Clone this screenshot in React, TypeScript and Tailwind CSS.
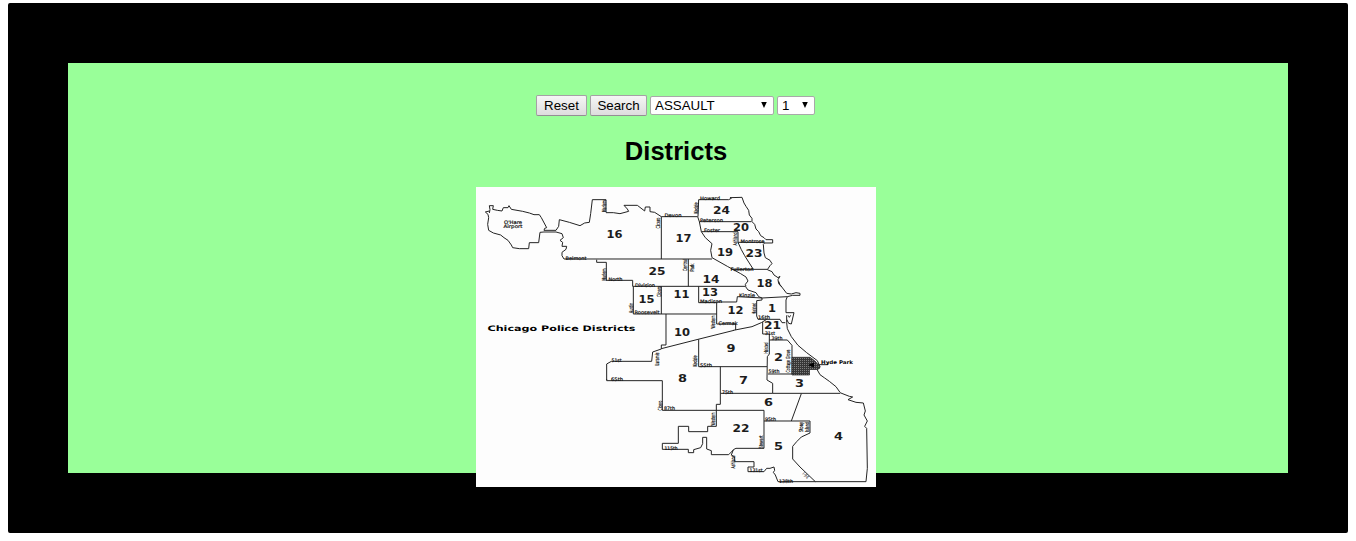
import React from "react";

type Label = { t: string; x: number; y: number; w: number; v?: boolean };

// Outline strokes, grouped by the origin of each map sector (three units per pixel).
const sectors: { x: number; y: number; d: string[] }[] = [
  {
    x: 476,
    y: 187,
    d: [
      "M40 78L42 68L40 56H52L50 67L64 70L78 72L82 62L96 62L99 56L106 67L140 73L160 78L174 83H190L196 92L212 122L206 124L204 130H240L248 118L250 98L280 106L312 116L326 108L340 106L344 80L349 38H390V76",
      "M40 72L28 75L36 82L38 92L35 112L38 130L52 138L74 144L84 152L96 160L106 174L110 182L130 185H158L160 167H188L192 136L204 135H240L258 140L262 152L252 160L260 166L258 178H272L270 187L258 196V206L264 216H372",
      "M362 218V226H391V280",
    ],
  },
  {
    x: 600,
    y: 187,
    d: [
      "M18 77L40 77L60 80L86 73L82 66L72 55H112L134 72L136 60H150V74L164 76L184 89H293",
      "M184 89V216M0 216H336M265 216V298M18 280H98V298H436",
    ],
  },
  {
    x: 690,
    y: 187,
    d: [
      "M24 89L26 38H116L124 34L120 32L156 31L162 48L168 58L176 70L178 84L186 94V104L194 112L198 126L206 134L212 146L222 152L228 158H248V168H224L220 172L222 198L226 212L240 220L246 230L240 236L232 248L246 254L252 264L264 272L270 268L264 278L266 290L274 299",
      "M23 89L28 104H184M28 104L34 134L46 152L66 170L62 190L66 212L112 238L152 260L168 270L174 282L166 292L168 298M34 134H144V166H224M144 166L154 188L164 206L174 222L190 247H232M124 247H190",
    ],
  },
  {
    x: 600,
    y: 280,
    d: [
      "M100 19V102H198V195H184V207L158 216L155 244H34L20 252V300",
      "M184 19V102M198 102H350M296 19V68H350V132",
      "M184 206L294 178L402 151M296 178V260H501M361 260V373",
    ],
  },
  {
    x: 690,
    y: 280,
    d: [
      "M166 19L174 30L198 38L206 50L216 54L292 50L288 60V98H312L304 132L296 130L290 118V106M286 128H276L270 118H204L200 108V62L216 60V54L142 50L140 66H80",
      "M266 4L270 14L290 40L304 42L318 38L330 40V46H308L292 50M294 106L298 112L302 106",
      "M80 132H137V150M130 151L186 140L214 128L230 118M218 126V162H238V222L232 230L231 300L248 310V340H92",
      "M238 180H292L306 196V282H234",
      "M290 118V128L292 146L304 170L324 196L350 218L382 242L390 260L382 270L390 284L404 294L418 304L438 320L450 337M248 340H450M334 341L304 423",
      "M356 254H414V246",
    ],
  },
  {
    x: 600,
    y: 375,
    d: [
      "M20 12V17H187V106H492M361 88H349V154H323V170H266V154H235V205H187V223H265V233H281V224L302 218L308 206V187H320V222L334 227V239H386L400 225",
    ],
  },
  {
    x: 720,
    y: 375,
    d: [
      "M132 106V220H48L40 224L34 240L44 246V260H102V276H84V290H132L140 280H150L162 276L164 286L160 292L166 300L174 320H438L442 280L440 160L434 154L442 138L432 120L436 108L430 84L408 82L384 74L398 66L388 64L360 53",
      "M132 138H270V174L244 186L230 200L218 214V252L240 276L286 320",
    ],
  },
];

const districts: Label[] = [
  { t: "24", x: 721.5, y: 214, w: 17 },
  { t: "20", x: 741, y: 231, w: 16 },
  { t: "16", x: 614.5, y: 238, w: 16 },
  { t: "17", x: 683.5, y: 242, w: 16 },
  { t: "19", x: 725, y: 256, w: 16 },
  { t: "23", x: 754, y: 257, w: 17 },
  { t: "25", x: 657, y: 275, w: 17 },
  { t: "14", x: 711, y: 283, w: 17 },
  { t: "18", x: 764.5, y: 287, w: 16 },
  { t: "15", x: 646.5, y: 303, w: 16 },
  { t: "11", x: 681.5, y: 298, w: 16 },
  { t: "13", x: 710, y: 296, w: 16 },
  { t: "12", x: 735.5, y: 314, w: 16 },
  { t: "1", x: 772, y: 312, w: 8 },
  { t: "21", x: 772.5, y: 329, w: 17 },
  { t: "10", x: 682, y: 336, w: 16 },
  { t: "9", x: 731, y: 352, w: 9 },
  { t: "2", x: 778.5, y: 361, w: 9 },
  { t: "8", x: 682.5, y: 382, w: 9 },
  { t: "7", x: 743.5, y: 384, w: 9 },
  { t: "3", x: 799.5, y: 387, w: 9 },
  { t: "6", x: 768.5, y: 406, w: 9 },
  { t: "22", x: 741, y: 432, w: 17 },
  { t: "4", x: 838.5, y: 440, w: 9 },
  { t: "5", x: 778.5, y: 450, w: 9 },
];

const streets: Label[] = [
  { t: "O'Hare", x: 513, y: 223.5, w: 18 },
  { t: "Airport", x: 513, y: 228.2, w: 19 },
  { t: "Harlem", x: 605.5, y: 206, w: 12, v: true },
  { t: "Belmont", x: 576, y: 259.5, w: 21 },
  { t: "Devon", x: 673, y: 217, w: 17 },
  { t: "Cicero", x: 659.5, y: 223, w: 11, v: true },
  { t: "Kedzie", x: 698, y: 208, w: 11, v: true },
  { t: "Howard", x: 710, y: 199.5, w: 20 },
  { t: "Peterson", x: 711.5, y: 221.5, w: 23 },
  { t: "Foster", x: 712, y: 231.5, w: 16 },
  { t: "Ashland", x: 737, y: 239, w: 13, v: true },
  { t: "Montrose", x: 752.5, y: 243, w: 24 },
  { t: "Fullerton", x: 742, y: 270.5, w: 23 },
  { t: "Harlem", x: 605.5, y: 274.5, w: 12, v: true },
  { t: "North", x: 615.5, y: 280.5, w: 14 },
  { t: "Division", x: 645, y: 286.5, w: 20 },
  { t: "Central", x: 687, y: 265, w: 12, v: true },
  { t: "Park", x: 694, y: 267.5, w: 8, v: true },
  { t: "Cicero", x: 661, y: 291.5, w: 11, v: true },
  { t: "Austin", x: 632.5, y: 308, w: 10, v: true },
  { t: "Roosevelt", x: 647, y: 314, w: 25 },
  { t: "Madison", x: 711, y: 302.5, w: 22 },
  { t: "Kinzie", x: 747, y: 297, w: 16 },
  { t: "Halsted", x: 755.5, y: 308.5, w: 11, v: true },
  { t: "16th", x: 764, y: 318.5, w: 12 },
  { t: "Western", x: 714.5, y: 322, w: 13, v: true },
  { t: "Cermak", x: 728, y: 324.5, w: 19 },
  { t: "31st", x: 770, y: 334.5, w: 10 },
  { t: "39th", x: 777, y: 340, w: 11 },
  { t: "Halsted", x: 767.5, y: 348, w: 11, v: true },
  { t: "Cottage Grove", x: 789.5, y: 361, w: 23, v: true },
  { t: "59th", x: 774, y: 373, w: 11 },
  { t: "51st", x: 616.5, y: 361.5, w: 10 },
  { t: "65th", x: 617, y: 380.5, w: 12 },
  { t: "Laramie", x: 658.5, y: 359, w: 13, v: true },
  { t: "Kedzie", x: 697, y: 361, w: 11, v: true },
  { t: "55th", x: 706, y: 366.5, w: 12 },
  { t: "75th", x: 727.5, y: 393.5, w: 11 },
  { t: "Cicero", x: 661.5, y: 405.5, w: 10, v: true },
  { t: "87th", x: 669.5, y: 410, w: 11 },
  { t: "Western", x: 715, y: 419, w: 13, v: true },
  { t: "95th", x: 770.5, y: 421, w: 11 },
  { t: "Stony", x: 803, y: 427, w: 10, v: true },
  { t: "Island", x: 809, y: 427, w: 10, v: true },
  { t: "Stewart", x: 762.5, y: 442, w: 13, v: true },
  { t: "115th", x: 671, y: 449.5, w: 13 },
  { t: "Ashland", x: 734.5, y: 462, w: 13, v: true },
  { t: "131st", x: 756, y: 471.5, w: 13 },
  { t: "138th", x: 786, y: 482.5, w: 14 },
];

function DistrictMap() {
  return (
    <svg
      className="block h-[300px] w-[400px] shrink-0 bg-[#fdfdfd]"
      viewBox="476 187 400 300"
      fontFamily='"DejaVu Sans", Verdana, sans-serif'
      role="img"
    >
      <defs>
        <pattern id="hatch" width="2" height="2" patternUnits="userSpaceOnUse">
          <rect width="2" height="2" fill="#383838" />
          <rect width="1" height="1" fill="#808080" />
        </pattern>
      </defs>
      {sectors.map((s, i) => (
        <g
          key={i}
          transform={`translate(${s.x} ${s.y}) scale(0.33333)`}
          fill="none"
          stroke="#222"
          strokeWidth="3"
          strokeLinejoin="round"
        >
          {s.d.map((d) => (
            <path key={d} d={d} />
          ))}
        </g>
      ))}
      <path
        d="M792 357.3H810L815 361L819 365.5L820 368L817 369.5H809.5V375H792Z"
        fill="url(#hatch)"
        stroke="#222"
        strokeWidth="0.7"
      />
      <path d="M808 365L814 362.5V367.5Z" fill="#000" />
      {streets.map((s, i) => (
        <text
          key={i}
          x={s.v ? 0 : s.x}
          y={s.v ? 0 : s.y}
          transform={s.v ? `translate(${s.x} ${s.y}) rotate(-90)` : undefined}
          textAnchor="middle"
          fontSize={s.v ? 5.5 : 4.8}
          stroke="#111"
          strokeWidth="0.2"
          fill="#111"
          textLength={s.w}
          lengthAdjust="spacingAndGlyphs"
        >
          {s.t}
        </text>
      ))}
      <text
        transform="translate(802 474) rotate(48)"
        fontSize="5"
        fill="#111"
        textLength="7"
        lengthAdjust="spacingAndGlyphs"
      >
        I-94
      </text>
      {districts.map((s) => (
        <text
          key={s.t}
          x={s.x}
          y={s.y}
          textAnchor="middle"
          fontSize="9.6"
          fontWeight="bold"
          fill="#1c1c1c"
          textLength={s.w}
          lengthAdjust="spacingAndGlyphs"
        >
          {s.t}
        </text>
      ))}
      <text x="821" y="363.5" fontSize="5" fontWeight="bold" textLength="32" lengthAdjust="spacingAndGlyphs">
        Hyde Park
      </text>
      <text x="487.5" y="331" fontSize="7.5" fontWeight="bold" textLength="148" lengthAdjust="spacingAndGlyphs">
        Chicago Police Districts
      </text>
    </svg>
  );
}

function Arrow() {
  return (
    <svg className="pointer-events-none absolute top-[6px] right-[7px] h-[6px] w-[6px]" viewBox="0 0 6 6">
      <path d="M0.2 0H5.8L3 6Z" fill="#000" />
    </svg>
  );
}

const buttonClass =
  "h-[21px] rounded-[2px] border border-[#a6a0a6] border-b-[#948e94] bg-linear-to-b from-[#f6f6f6] to-[#dddddd] text-center text-[13.333px] leading-[19px] text-black";
const selectClass =
  "block h-[19px] w-full appearance-none rounded-[2px] border border-[#a9a9a9] bg-white pl-1 text-[13.333px] leading-[17px] text-black outline-none";

export default function App() {
  return (
    <div className='h-[541px] overflow-hidden bg-white px-2 pt-[3px] font-["Liberation_Sans",Arial,sans-serif] text-black'>
      <div className="flex h-[530px] flex-col items-center rounded-[2px] border-[60px] border-black bg-[#99ff99] pt-8 pr-1">
        <div className="flex h-[21px] shrink-0 items-center gap-[3px] pr-px">
          <button className={`${buttonClass} w-[51px]`}>Reset</button>
          <button className={`${buttonClass} w-[57px]`}>Search</button>
          <div className="relative w-[124px]">
            <select className={selectClass} defaultValue="ASSAULT">
              <option>ASSAULT</option>
            </select>
            <Arrow />
          </div>
          <div className="relative w-[38px]">
            <select className={selectClass} defaultValue="1">
              <option>1</option>
            </select>
            <Arrow />
          </div>
        </div>
        <h2 className="mt-5 mb-[21px] h-[30px] shrink-0 text-[25.6px] leading-[30px] font-bold">Districts</h2>
        <DistrictMap />
      </div>
    </div>
  );
}
